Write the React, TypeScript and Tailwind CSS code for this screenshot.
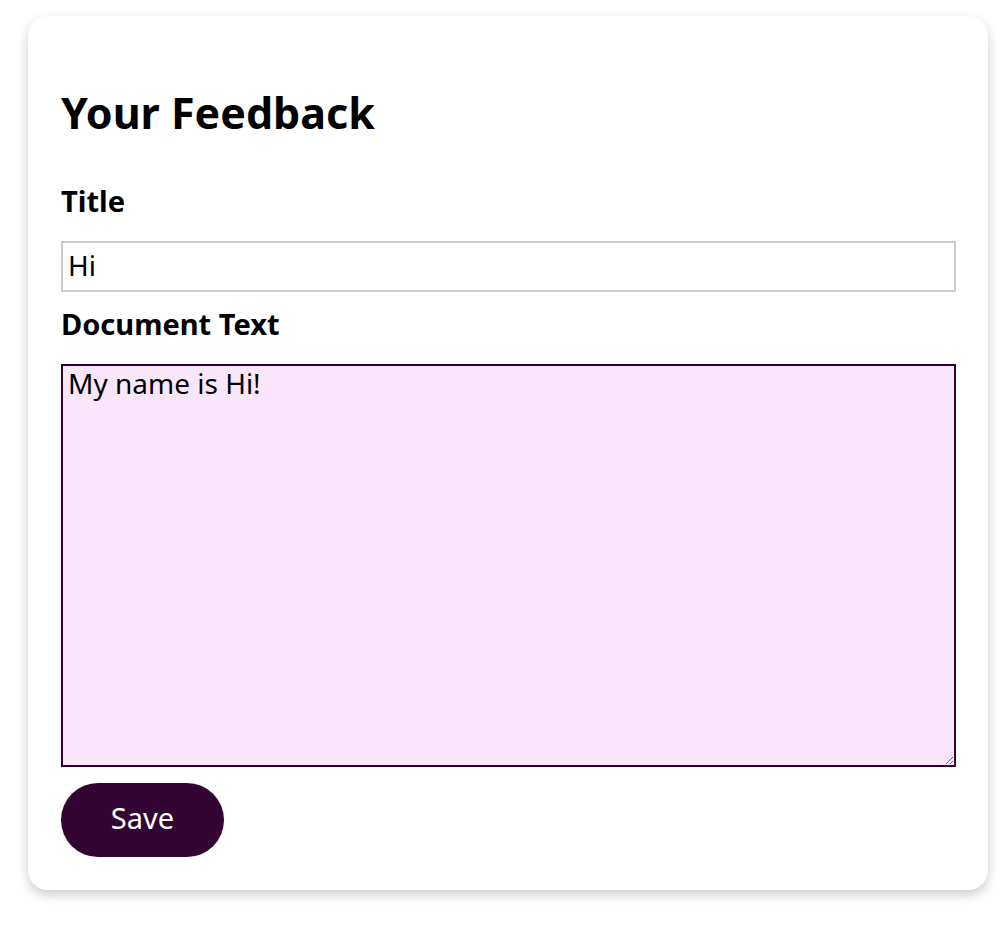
import React from "react";

export default function App() {
  return (
    <div className="min-h-screen bg-white pt-4 px-7" style={{ fontFamily: '"Noto Sans", "Noto Sans CJK KR", sans-serif' }}>
      <div className="w-[960px] rounded-[20px] bg-white px-[33px] pt-[64px] pb-[33px] shadow-[0_5px_12px_rgba(0,0,0,0.2)]">
        <h1 className="text-[43px] font-bold leading-[66px] text-black">Your Feedback</h1>
        <label className="block mt-[35px] text-[29px] font-bold leading-[40px] text-black">Title</label>
        <input
          defaultValue="Hi"
          className="block mt-[20px] w-[895px] h-[51px] border-2 border-[#cccccc] px-[5px] pb-[4px] text-[28px] text-black outline-none"
        />
        <label className="block mt-[12px] text-[29px] font-bold leading-[40px] text-black">Document Text</label>
        <textarea
          defaultValue="My name is Hi!"
          className="block mt-[20px] w-[895px] h-[403px] border-2 border-[#330033] bg-[#f9e6fb] px-[5px] py-0 text-[28px] leading-[34px] text-black outline-none"
        />
        <button className="block mt-[16px] h-[74px] w-[163px] rounded-full bg-[#330533] pb-[4px] text-[29px] text-white">Save</button>
      </div>
    </div>
  );
}
